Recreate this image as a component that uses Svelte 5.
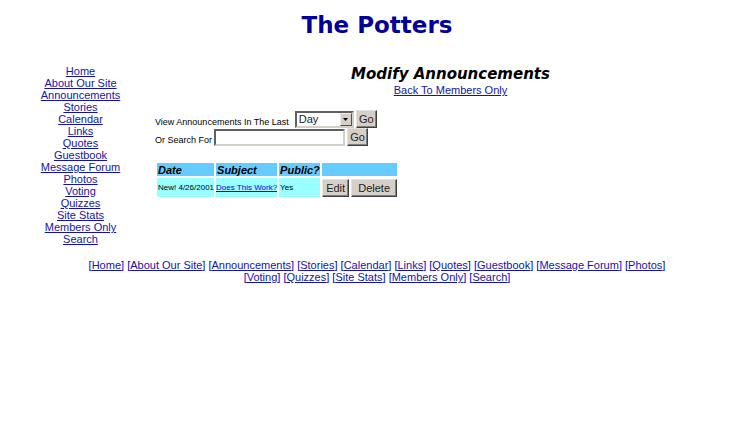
<script>
  const pages = [
    'Home', 'About Our Site', 'Announcements', 'Stories', 'Calendar',
    'Links', 'Quotes', 'Guestbook', 'Message Forum', 'Photos', 'Voting',
    'Quizzes', 'Site Stats', 'Members Only', 'Search'
  ];
  const announcements = [
    { date: 'New! 4/26/2001', subject: 'Does This Work?', visible: 'Yes' }
  ];
  let period = $state('Day');
  let query = $state('');
</script>

<div class="page">
  <header><h1>The Potters</h1></header>

  <div class="columns">
    <nav class="side" aria-label="Site">
      {#each pages as page}
        <a href="#top">{page}</a>
      {/each}
    </nav>

    <main>
      <div class="heading">
        <h2>Modify Announcements</h2>
        <a href="#members">Back To Members Only</a>
      </div>

      <form class="line" onsubmit={(e) => e.preventDefault()}>
        <label for="period">View Announcements In The Last</label>
        <span class="drop">
          <select id="period" bind:value={period}>
            <option>Day</option>
            <option>Week</option>
            <option>Month</option>
          </select>
          <span class="arrow" aria-hidden="true">
            <svg width="5" height="3" viewBox="0 0 5 3"><path d="M0 0h5L2.5 3z" /></svg>
          </span>
        </span>
        <button class="go">Go</button>
      </form>
      <form class="line" onsubmit={(e) => e.preventDefault()}>
        <label for="query">Or Search For</label>
        <input id="query" type="text" bind:value={query} />
        <button class="go">Go</button>
      </form>

      <table>
        <thead>
          <tr><th>Date</th><th>Subject</th><th>Public?</th><td></td></tr>
        </thead>
        <tbody>
          {#each announcements as item}
            <tr>
              <td class="date">{item.date}</td>
              <td class="subject"><a href="#announcement">{item.subject}</a></td>
              <td class="public">{item.visible}</td>
              <td class="actions">
                <div>
                  <button class="edit">Edit</button>
                  <button class="delete">Delete</button>
                </div>
              </td>
            </tr>
          {/each}
        </tbody>
      </table>
    </main>
  </div>

  <footer>
    {#each pages as page}
      <span>[<a href="#top">{page}</a>]</span>{' '}
    {/each}
  </footer>
</div>

<style>
  :global(body) {
    margin: 0;
    background: #fff;
  }
  .page {
    font-family: "Liberation Sans", Arial, sans-serif;
    font-size: 11px;
    line-height: 12px;
    color: #000;
    padding: 10px 0 0 4px;
  }
  a {
    color: #1414a4;
  }
  h1,
  h2 {
    margin: 0;
    font-family: "DejaVu Sans", Verdana, sans-serif;
    font-weight: bold;
    text-align: center;
  }
  h1 {
    font-size: 23px;
    line-height: 30px;
    color: #000099;
  }
  h2 {
    font-size: 15px;
    line-height: 19px;
    font-style: italic;
  }
  .columns {
    display: flex;
    margin-top: 25px;
  }
  .side {
    flex: none;
    width: 149px;
    padding-left: 2px;
    display: flex;
    flex-direction: column;
    align-items: center;
  }
  main {
    flex: 1;
    min-width: 0;
  }
  .heading {
    text-align: center;
    padding-right: 4px;
    margin-bottom: 14px;
  }
  .line {
    display: flex;
    align-items: center;
    height: 18px;
    font-size: 9px;
  }
  label {
    padding: 6px 2px 0 0;
  }
  button,
  select,
  input {
    box-sizing: border-box;
    margin: 0;
    border-radius: 0;
    font-family: inherit;
    font-size: 11px;
    color: #222;
  }
  button {
    height: 18px;
    padding: 0;
    background: #d4d0c8;
    border: 1px solid;
    border-color: #e4e2dc #404040 #404040 #e4e2dc;
    box-shadow: inset -1px -1px #808080;
  }
  .go {
    width: 21px;
    margin-left: 2px;
  }
  .drop {
    display: grid;
    width: 59px;
    height: 17px;
    margin-left: 4px;
  }
  select,
  input {
    height: 17px;
    background: #fff;
    border: 2px solid;
    border-color: #606060 #d4d0c8 #d4d0c8 #606060;
  }
  select {
    grid-area: 1 / 1;
    appearance: none;
    padding: 0 2px;
  }
  .arrow {
    grid-area: 1 / 1;
    justify-self: end;
    box-sizing: border-box;
    width: 12px;
    height: 13px;
    margin: 2px;
    display: flex;
    align-items: center;
    justify-content: center;
    background: #d4d0c8;
    border: 1px solid;
    border-color: #eee #505050 #505050 #eee;
    pointer-events: none;
  }
  input {
    width: 131px;
    padding: 0 2px;
  }
  table {
    margin-top: 15px;
    border-spacing: 2px;
    font-size: 8px;
  }
  th,
  td {
    padding: 0 0 0 1px;
    text-align: left;
  }
  thead tr > * {
    height: 13px;
    background: #66ccff;
    font-size: 11px;
    font-style: italic;
  }
  tbody td {
    height: 19px;
    background: #99ffff;
    white-space: nowrap;
  }
  tbody .subject {
    padding: 0;
  }
  .subject a {
    color: #0000ee;
  }
  .public {
    width: 40px;
  }
  tbody .actions {
    padding: 0;
    background: #fff;
  }
  .actions div {
    display: flex;
    gap: 2px;
  }
  .edit {
    width: 27px;
  }
  .delete {
    width: 46px;
  }
  footer {
    width: 80%;
    margin: 14px auto 0;
    text-align: center;
    color: #0000cc;
  }
  footer span {
    white-space: nowrap;
  }
</style>
